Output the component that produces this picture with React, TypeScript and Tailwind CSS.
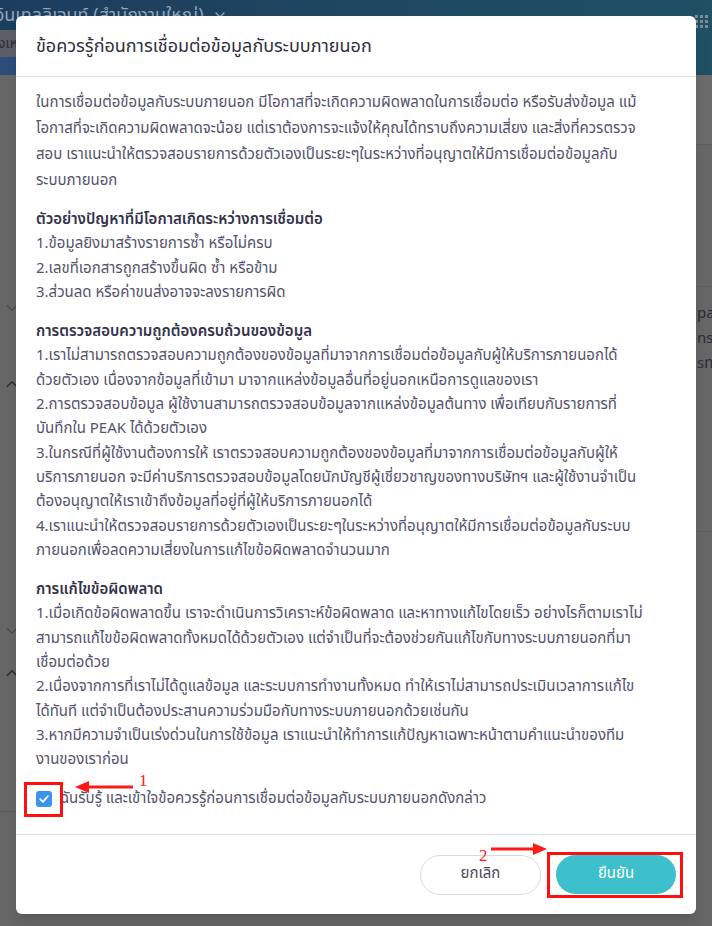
import { ChevronDown, ChevronUp } from "lucide-react";

const intro = [
   "ในการเชื่อมต่อข้อมูลกับระบบภายนอก มีโอกาสที่จะเกิดความผิดพลาดในการเชื่อมต่อ หรือรับส่งข้อมูล แม้",
   "โอกาสที่จะเกิดความผิดพลาดจะน้อย แต่เราต้องการจะแจ้งให้คุณได้ทราบถึงความเสี่ยง และสิ่งที่ควรตรวจ",
   "สอบ เราแนะนำให้ตรวจสอบรายการด้วยตัวเองเป็นระยะๆในระหว่างที่อนุญาตให้มีการเชื่อมต่อข้อมูลกับ",
   "ระบบภายนอก",
];

const sections = [
   {
      title: "ตัวอย่างปัญหาที่มีโอกาสเกิดระหว่างการเชื่อมต่อ",
      lines: [
         "1.ข้อมูลยิงมาสร้างรายการซ้ำ หรือไม่ครบ",
         "2.เลขที่เอกสารถูกสร้างขึ้นผิด ซ้ำ หรือข้าม",
         "3.ส่วนลด หรือค่าขนส่งอาจจะลงรายการผิด",
      ],
   },
   {
      title: "การตรวจสอบความถูกต้องครบถ้วนของข้อมูล",
      lines: [
         "1.เราไม่สามารถตรวจสอบความถูกต้องของข้อมูลที่มาจากการเชื่อมต่อข้อมูลกับผู้ให้บริการภายนอกได้",
         "ด้วยตัวเอง เนื่องจากข้อมูลที่เข้ามา มาจากแหล่งข้อมูลอื่นที่อยู่นอกเหนือการดูแลของเรา",
         "2.การตรวจสอบข้อมูล ผู้ใช้งานสามารถตรวจสอบข้อมูลจากแหล่งข้อมูลต้นทาง เพื่อเทียบกับรายการที่",
         "บันทึกใน PEAK ได้ด้วยตัวเอง",
         "3.ในกรณีที่ผู้ใช้งานต้องการให้ เราตรวจสอบความถูกต้องของข้อมูลที่มาจากการเชื่อมต่อข้อมูลกับผู้ให้",
         "บริการภายนอก จะมีค่าบริการตรวจสอบข้อมูลโดยนักบัญชีผู้เชี่ยวชาญของทางบริษัทฯ และผู้ใช้งานจำเป็น",
         "ต้องอนุญาตให้เราเข้าถึงข้อมูลที่อยู่ที่ผู้ให้บริการภายนอกได้",
         "4.เราแนะนำให้ตรวจสอบรายการด้วยตัวเองเป็นระยะๆในระหว่างที่อนุญาตให้มีการเชื่อมต่อข้อมูลกับระบบ",
         "ภายนอกเพื่อลดความเสี่ยงในการแก้ไขข้อผิดพลาดจำนวนมาก",
      ],
   },
   {
      title: "การแก้ไขข้อผิดพลาด",
      lines: [
         "1.เมื่อเกิดข้อผิดพลาดขึ้น เราจะดำเนินการวิเคราะห์ข้อผิดพลาด และหาทางแก้ไขโดยเร็ว อย่างไรก็ตามเราไม่",
         "สามารถแก้ไขข้อผิดพลาดทั้งหมดได้ด้วยตัวเอง แต่จำเป็นที่จะต้องช่วยกันแก้ไขกับทางระบบภายนอกที่มา",
         "เชื่อมต่อด้วย",
         "2.เนื่องจากการที่เราไม่ได้ดูแลข้อมูล และระบบการทำงานทั้งหมด ทำให้เราไม่สามารถประเมินเวลาการแก้ไข",
         "ได้ทันที แต่จำเป็นต้องประสานความร่วมมือกับทางระบบภายนอกด้วยเช่นกัน",
         "3.หากมีความจำเป็นเร่งด่วนในการใช้ข้อมูล เราแนะนำให้ทำการแก้ปัญหาเฉพาะหน้าตามคำแนะนำของทีม",
         "งานของเราก่อน",
      ],
   },
];

function Backdrop () {
   return (
      <div className="flex flex-col h-full">
         {/* top bar */}
         <div className="h-[75px] bg-gradient-to-r from-[#1d3d5e] to-[#1f5064] flex flex-col">
            <div className="h-[30px] flex items-center justify-between pr-1">
               <span className="flex items-center gap-2 text-[#8fa6bd] text-[18px] -ml-[6px] whitespace-nowrap">
                  อินเทลลิเจนท์ (สำนักงานใหญ่)
                  <ChevronDown size={16} />
               </span>
               <div className="grid grid-cols-3 gap-[2px] mt-[12px]">
                  {Array.from({ length: 9 }).map((_, i) => (
                     <div key={i} className="w-[3px] h-[3px] bg-[#7f8c96]" />
                  ))}
               </div>
            </div>
            <div className="flex-1 flex">
               <div className="w-[40px] flex flex-col">
                  <div className="h-[27px] bg-[#5b6068] text-[#2a2f36] text-[14px] leading-[27px] -ml-[2px] whitespace-nowrap overflow-hidden">งเหล</div>
                  <div className="flex-1 bg-[#2c4d7a]" />
               </div>
               <div className="flex-1" />
            </div>
         </div>
         {/* page body */}
         <div className="flex-1 flex bg-[#666666]">
            <div className="w-[40px] flex flex-col text-[#2c2c34]">
               <div className="h-[224px]" />
               <ChevronDown size={18} className="ml-[3px] text-[#4c4c54]" />
               <div className="h-[58px]" />
               <ChevronUp size={18} className="ml-[3px]" />
               <div className="h-[229px]" />
               <ChevronDown size={18} className="ml-[3px] text-[#4c4c54]" />
               <div className="h-[24px]" />
               <ChevronUp size={18} className="ml-[3px]" />
               <div className="h-[130px] border-b border-[#5a5a5a]" />
            </div>
            <div className="flex-1 flex flex-col">
               <div className="h-[70px] bg-[#6b6b6b] border-b border-[#5e5e5e]" />
               <div className="h-[142px] border-b border-[#5e5e5e]" />
               <div className="flex justify-end pt-[14px] text-[15px] leading-[25px] text-[#2e2a38]">
                  <div className="w-[15px] overflow-hidden whitespace-nowrap">
                     <div>pa</div>
                     <div>nsw</div>
                     <div>sท</div>
                  </div>
               </div>
               <div className="h-[156px] border-b border-[#5e5e5e]" />
            </div>
         </div>
      </div>
   );
}

function LeftArrow () {
   return (
      <svg width="60" height="12" viewBox="0 0 60 12" className="block">
         <line x1="10" y1="6" x2="58" y2="6" stroke="#ff1a1a" strokeWidth="3" />
         <polygon points="0,6 14,0 14,12" fill="#ff1a1a" />
      </svg>
   );
}

function RightArrow () {
   return (
      <svg width="56" height="12" viewBox="0 0 56 12" className="block">
         <line x1="0" y1="6" x2="44" y2="6" stroke="#ff1a1a" strokeWidth="3" />
         <polygon points="56,6 42,0 42,12" fill="#ff1a1a" />
      </svg>
   );
}

export default function App () {
   return (
      <div className="relative h-[926px] w-full overflow-hidden font-['Noto_Sans_Thai','Noto_Sans','Liberation_Sans',sans-serif]">
         <Backdrop />

         {/* Modal */}
         <div className="absolute inset-0 flex justify-center pt-4">
            <div className="relative w-[680px] h-[898px] bg-white rounded-md shadow-lg flex flex-col">
               <div className="h-[61px] flex items-center px-5 border-b border-[#dcdce8]">
                  <h2 className="text-[18px] text-[#2f2f3d]">ข้อควรรู้ก่อนการเชื่อมต่อข้อมูลกับระบบภายนอก</h2>
               </div>

               <div className="flex-1 px-5 pt-[13px] text-[15px] text-[#54526c] whitespace-nowrap">
                  <div className="leading-[26px] mb-[14px]">
                     {intro.map((l) => <div key={l}>{l}</div>)}
                  </div>
                  {sections.map((s) => (
                     <div key={s.title} className="leading-[24.3px] mb-[15px]">
                        <div className="font-semibold text-[#34324a]">{s.title}</div>
                        {s.lines.map((l) => <div key={l}>{l}</div>)}
                     </div>
                  ))}

                  <label className="relative flex items-center gap-2 mt-[12px]">
                     <span className="w-4 h-4 rounded-[3px] bg-[#3a94ee] flex items-center justify-center">
                        <svg width="12" height="12" viewBox="0 0 12 12">
                           <path d="M2.2 6.2 L4.9 8.9 L9.9 3.2" fill="none" stroke="white" strokeWidth="1.8" strokeLinecap="round" strokeLinejoin="round" />
                        </svg>
                     </span>
                     <span>ฉันรับรู้ และเข้าใจข้อควรรู้ก่อนการเชื่อมต่อข้อมูลกับระบบภายนอกดังกล่าว</span>
                  </label>
               </div>

               <div className="h-[80px] border-t border-[#dcdce8] flex items-center justify-end gap-[15px] pr-5">
                  <button className="w-[121px] h-10 rounded-full border border-[#d9d9e6] bg-white text-[15px] text-[#4b4963]">ยกเลิก</button>
                  <button className="w-[120px] h-[39px] rounded-full bg-[#3dbfcc] text-[15px] text-white">ยืนยัน</button>
               </div>

               {/* annotation 1 */}
               <div className="absolute left-[8px] top-[766px] w-[39px] h-[35px] border-[3px] border-[#ff1010]" />
               <div className="absolute left-[59px] top-[765px]"><LeftArrow /></div>
               <div className="absolute left-[123px] top-[756px] text-[17px] leading-none text-[#ff1a1a] font-['Liberation_Serif',serif]">1</div>

               {/* annotation 2 */}
               <div className="absolute left-[531px] top-[836px] w-[136px] h-[46px] border-[3px] border-[#ff1010]" />
               <div className="absolute left-[475px] top-[827px]"><RightArrow /></div>
               <div className="absolute left-[463px] top-[831px] text-[17px] leading-none text-[#ff1a1a] font-['Liberation_Serif',serif]">2</div>
            </div>
         </div>
      </div>
   );
}
